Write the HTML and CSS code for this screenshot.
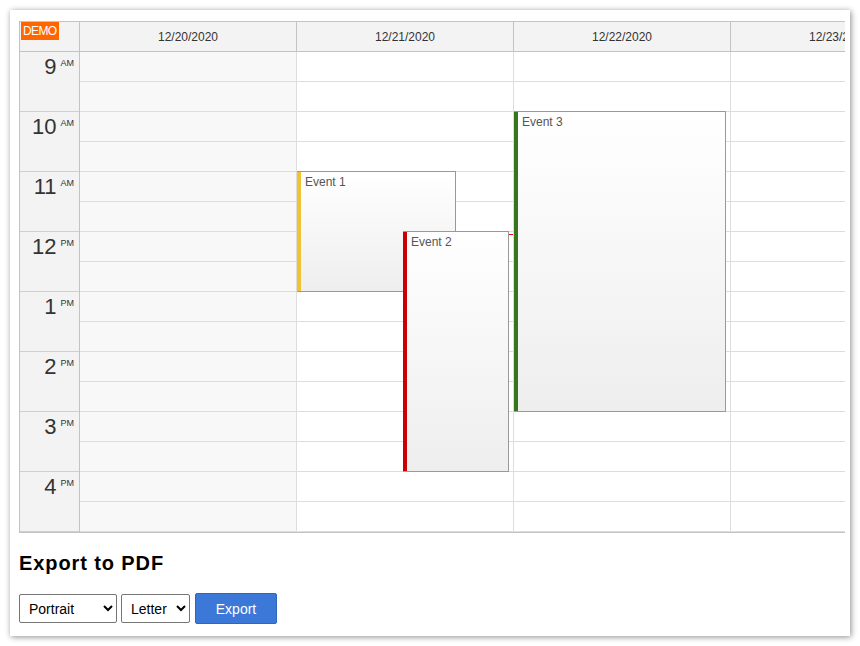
FILE: index.html
```html
<!DOCTYPE html>
<html>
<head>
<meta charset="utf-8">
<title>Export to PDF</title>
<link rel="stylesheet" href="styles.css">
</head>
<body>
<div class="frame">
  <div class="cal">
    <div class="cal-head">
      <div class="corner"><span class="demo">DEMO</span></div>
      <div class="colhead">12/20/2020</div>
      <div class="colhead">12/21/2020</div>
      <div class="colhead">12/22/2020</div>
      <div class="colhead">12/23/2020</div>
    </div>
    <div class="cal-body">
      <div class="rowheads">
        <div class="hour"><span class="num">9</span><span class="ampm">AM</span></div>
        <div class="hour"><span class="num">10</span><span class="ampm">AM</span></div>
        <div class="hour"><span class="num">11</span><span class="ampm">AM</span></div>
        <div class="hour"><span class="num">12</span><span class="ampm">PM</span></div>
        <div class="hour"><span class="num">1</span><span class="ampm">PM</span></div>
        <div class="hour"><span class="num">2</span><span class="ampm">PM</span></div>
        <div class="hour"><span class="num">3</span><span class="ampm">PM</span></div>
        <div class="hour"><span class="num">4</span><span class="ampm">PM</span></div>
      </div>
      <div class="day off">
        <div class="cell"></div><div class="cell"></div><div class="cell"></div><div class="cell"></div>
        <div class="cell"></div><div class="cell"></div><div class="cell"></div><div class="cell"></div>
        <div class="cell"></div><div class="cell"></div><div class="cell"></div><div class="cell"></div>
        <div class="cell"></div><div class="cell"></div><div class="cell"></div><div class="cell"></div>
      </div>
      <div class="day">
        <div class="cell"></div><div class="cell"></div><div class="cell"></div><div class="cell"></div>
        <div class="cell"></div><div class="cell"></div><div class="cell"></div><div class="cell"></div>
        <div class="cell"></div><div class="cell"></div><div class="cell"></div><div class="cell"></div>
        <div class="cell"></div><div class="cell"></div><div class="cell"></div><div class="cell"></div>
        <div class="event bar-yellow" style="top:119px;height:121px;left:0;width:159px">Event 1</div>
        <div class="event bar-red" style="top:179px;height:241px;left:106px;width:106px">Event 2</div>
        <div class="redmark" style="top:182px;left:212px"></div>
      </div>
      <div class="day">
        <div class="cell"></div><div class="cell"></div><div class="cell"></div><div class="cell"></div>
        <div class="cell"></div><div class="cell"></div><div class="cell"></div><div class="cell"></div>
        <div class="cell"></div><div class="cell"></div><div class="cell"></div><div class="cell"></div>
        <div class="cell"></div><div class="cell"></div><div class="cell"></div><div class="cell"></div>
        <div class="event bar-green" style="top:59px;height:301px;left:0;width:212px">Event 3</div>
      </div>
      <div class="day">
        <div class="cell"></div><div class="cell"></div><div class="cell"></div><div class="cell"></div>
        <div class="cell"></div><div class="cell"></div><div class="cell"></div><div class="cell"></div>
        <div class="cell"></div><div class="cell"></div><div class="cell"></div><div class="cell"></div>
        <div class="cell"></div><div class="cell"></div><div class="cell"></div><div class="cell"></div>
      </div>
    </div>
  </div>
  <h2 class="title">Export to PDF</h2>
  <div class="controls">
    <select class="sel sel-orient">
      <option>Portrait</option>
      <option>Landscape</option>
    </select>
    <select class="sel sel-paper">
      <option>Letter</option>
      <option>A4</option>
    </select>
    <button class="btn">Export</button>
  </div>
</div>
</body>
</html>
```

FILE: styles.css
```css
html, body {
  margin: 0;
  padding: 0;
  background: #ffffff;
}

body {
  font-family: "Liberation Sans", Arial, sans-serif;
  color: #333333;
}

.frame {
  margin: 10px;
  width: 840px;
  height: 626px;
  box-sizing: border-box;
  padding: 11px 5px 0 9px;
  background: #ffffff;
  box-shadow: 1px 1px 6px rgba(0, 0, 0, 0.45);
}

.cal {
  width: 825px;
  overflow: hidden;
  border-top: 1px solid #c3c3c3;
  border-left: 1px solid #c3c3c3;
  border-bottom: 1px solid #c3c3c3;
}

.cal-head {
  display: flex;
  height: 30px;
  background: #f3f3f3;
  border-bottom: 1px solid #c3c3c3;
  box-sizing: border-box;
}

.corner {
  position: relative;
  flex: 0 0 60px;
  box-sizing: border-box;
  border-right: 1px solid #c3c3c3;
}

.demo {
  position: absolute;
  left: 1px;
  top: 0;
  height: 18px;
  line-height: 18px;
  padding: 0 2px 0 2px;
  background: #ff6600;
  color: #ffffff;
  font-size: 12px;
  letter-spacing: -0.6px;
}

.colhead {
  flex: 0 0 217px;
  box-sizing: border-box;
  border-right: 1px solid #c3c3c3;
  display: flex;
  align-items: center;
  justify-content: center;
  font-size: 12px;
  color: #333333;
  white-space: nowrap;
}

.cal-body {
  display: flex;
}

.rowheads {
  flex: 0 0 60px;
  box-sizing: border-box;
  background: #f3f3f3;
  border-right: 1px solid #c3c3c3;
}

.hour {
  height: 60px;
  box-sizing: border-box;
  border-bottom: 1px solid #cfcfcf;
  display: flex;
  justify-content: flex-end;
  align-items: flex-start;
  padding-right: 5px;
  color: #333333;
}

.num {
  font-size: 22px;
  line-height: 22px;
  margin-top: 4px;
}

.ampm {
  font-size: 9px;
  line-height: 9px;
  margin-top: 7px;
  margin-left: 4px;
}

.day {
  position: relative;
  flex: 0 0 217px;
  box-sizing: border-box;
  border-right: 1px solid #dddddd;
  background: #ffffff;
}

.day.off {
  background: #f8f8f8;
}

.cell {
  height: 30px;
  box-sizing: border-box;
  border-bottom: 1px solid #dddddd;
}

.event {
  position: absolute;
  box-sizing: border-box;
  border: 1px solid #999999;
  border-left: none;
  padding: 3px 4px 0 8px;
  background: linear-gradient(#ffffff, #eeeeee);
  font-size: 12px;
  line-height: 14px;
  color: #555555;
  overflow: hidden;
}

.event::before {
  content: "";
  position: absolute;
  left: 0;
  top: -1px;
  bottom: -1px;
  width: 4px;
}

.bar-yellow::before { background: #f1c232; }
.bar-red::before { background: #cc0000; }
.bar-green::before { background: #38761d; }

.redmark {
  position: absolute;
  width: 4px;
  height: 1px;
  background: #ff0000;
}

.title {
  margin: 18px 0 0 0;
  font-size: 20px;
  line-height: 24px;
  font-weight: bold;
  letter-spacing: 0.9px;
  color: #000000;
}

.controls {
  display: flex;
  align-items: center;
  margin-top: 18px;
}

.sel {
  height: 29px;
  box-sizing: border-box;
  font-family: "Liberation Sans", Arial, sans-serif;
  font-size: 14px;
  color: #000000;
  background: #ffffff;
  border: 1px solid #767676;
  border-radius: 2px;
  padding: 0 4px 0 5px;
}

.sel-orient {
  width: 98px;
}

.sel-paper {
  width: 69px;
  margin-left: 4px;
}

.btn {
  width: 82px;
  height: 31px;
  margin-left: 5px;
  box-sizing: border-box;
  background: #3c78d8;
  border: 1px solid #3166ba;
  border-radius: 2px;
  color: #ffffff;
  font-family: "Liberation Sans", Arial, sans-serif;
  font-size: 14px;
  padding: 0;
}
```
